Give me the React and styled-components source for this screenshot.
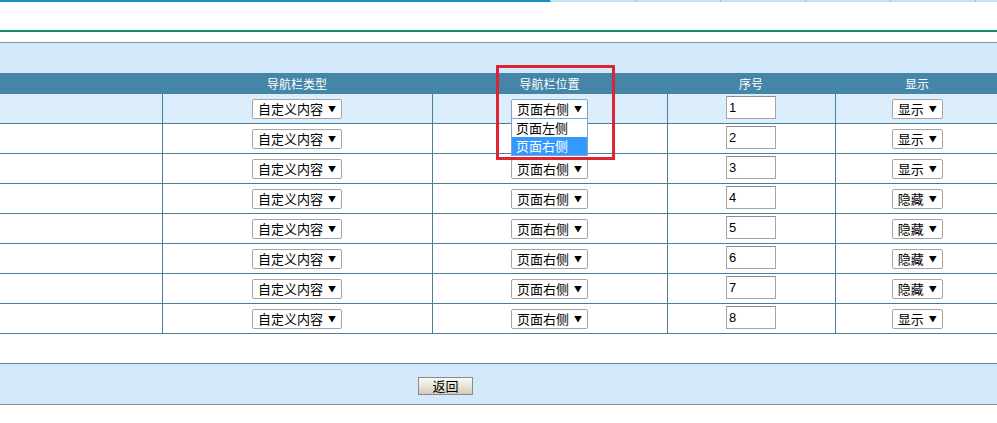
import styled, { createGlobalStyle } from "styled-components";

const GlobalStyle = createGlobalStyle`
  body {
    margin: 0;
    background: #fff;
    font-family: "Noto Sans CJK SC", "Liberation Sans", sans-serif;
    font-size: 13px;
    color: #000;
  }
`;

const rows = [
  { pos: "页面右侧", order: "1", show: "显示" },
  { pos: "页面右侧", order: "2", show: "显示" },
  { pos: "页面右侧", order: "3", show: "显示" },
  { pos: "页面右侧", order: "4", show: "隐藏" },
  { pos: "页面右侧", order: "5", show: "隐藏" },
  { pos: "页面右侧", order: "6", show: "隐藏" },
  { pos: "页面右侧", order: "7", show: "隐藏" },
  { pos: "页面右侧", order: "8", show: "显示" },
];

const Page = styled.div`
  width: 997px;
  overflow: hidden;
`;

const TopStrip = styled.div`
  display: flex;
  height: 2px;
`;

const ActiveStrip = styled.div`
  width: 550px;
  flex: none;
  background: #1591c8;
`;

const TabStrip = styled.div`
  width: 84px;
  flex: none;
  background: #bfe4f6;
  border-left: 1px solid #8cc6e2;
`;

const Masthead = styled.div`
  height: 28px;
  border-bottom: 2px solid #1b8a66;
`;

const Body = styled.div`
  margin-top: 10px;
  border-top: 1px solid #8a8f96;
`;

const Caption = styled.div`
  height: 30px;
  background: #d3e9fb;
`;

const Table = styled.table`
  border-collapse: collapse;
  table-layout: fixed;
  width: 999px;
`;

const HeadCell = styled.th`
  height: 21px;
  padding: 0;
  background: #4586a8;
  color: #fff;
  font-weight: normal;
  font-size: 12px;
  text-align: center;
  line-height: 21px;
`;

const Row = styled.tr`
  background: ${({ $hot }) => ($hot ? "#dcedfc" : "#fff")};
`;

const Cell = styled.td`
  position: relative;
  height: 29px;
  padding: 0;
  text-align: center;
  vertical-align: middle;
  border-bottom: 1px solid #4a7e96;
  border-left: ${({ $first }) => ($first ? "none" : "1px solid #4a7e96")};
`;

const SelectWrap = styled.span`
  position: relative;
  display: inline-block;
  vertical-align: middle;
  margin-top: -2px;
`;

const Select = styled.span`
  display: inline-flex;
  align-items: center;
  box-sizing: border-box;
  height: 20px;
  padding: 0 5px;
  gap: 5px;
  background: #fff;
  border: 1px solid ${({ $focus }) => ($focus ? "#7ea6d0" : "#a4a4a4")};
  border-radius: 2px;
  font-size: 13px;
  line-height: 18px;
  visibility: ${({ $covered }) => ($covered ? "hidden" : "visible")};
`;

const Arrow = styled.span`
  font-size: 8px;
  line-height: 1;
`;

const NumberBox = styled.span`
  display: inline-block;
  box-sizing: border-box;
  width: 50px;
  height: 23px;
  padding-left: 2px;
  text-align: left;
  background: #fff;
  border: 1px solid #a4a4a4;
  border-top-color: #8c8c8c;
  font-family: "Liberation Sans", Arial, sans-serif;
  font-size: 13px;
  line-height: 21px;
  vertical-align: middle;
  margin-top: -4px;
`;

const DropList = styled.div`
  position: absolute;
  left: 0;
  right: 0;
  top: 19px;
  z-index: 2;
  box-sizing: border-box;
  background: #fff;
  border: 1px solid #7ea6d0;
  text-align: left;
`;

const Option = styled.div`
  height: 18px;
  line-height: 18px;
  padding-left: 4px;
  font-size: 13px;
  white-space: nowrap;
  background: ${({ $active }) => ($active ? "#3399ff" : "#fff")};
  color: ${({ $active }) => ($active ? "#fff" : "#000")};
`;

const Highlight = styled.div`
  position: absolute;
  left: 63px;
  top: -29px;
  width: 119px;
  height: 95px;
  box-sizing: border-box;
  border: 3px solid #dc2432;
  z-index: 3;
  pointer-events: none;
`;

const Gap = styled.div`
  height: 29px;
`;

const Footer = styled.div`
  display: flex;
  align-items: center;
  height: 40px;
  padding-left: 418px;
  background: #d3e9fb;
  border-top: 1px solid #5a8aa0;
  border-bottom: 1px solid #8a8f96;
`;

const BackButton = styled.button`
  width: 55px;
  height: 18px;
  padding: 0;
  margin-top: 3px;
  border: 1px solid #8a8a8a;
  background: linear-gradient(#fbfaf6, #e4dfd3 60%, #d2cbbb);
  font-family: "Noto Sans CJK SC", sans-serif;
  font-size: 13px;
  line-height: 16px;
  color: #000;
`;

const Dropdown = ({ label, focus, covered, children }) => (
  <SelectWrap>
    <Select $focus={focus} $covered={covered}>
      {label}
      <Arrow>▼</Arrow>
    </Select>
    {children}
  </SelectWrap>
);

export default function App() {
  return (
    <Page>
      <GlobalStyle />
      <TopStrip>
        <ActiveStrip />
        {[0, 1, 2, 3, 4, 5].map((i) => (
          <TabStrip key={i} />
        ))}
      </TopStrip>
      <Masthead />
      <Body>
        <Caption />
        <Table>
          <colgroup>
            <col style={{ width: 162 }} />
            <col style={{ width: 270 }} />
            <col style={{ width: 235 }} />
            <col style={{ width: 168 }} />
            <col style={{ width: 164 }} />
          </colgroup>
          <thead>
            <tr>
              <HeadCell />
              <HeadCell>导航栏类型</HeadCell>
              <HeadCell>导航栏位置</HeadCell>
              <HeadCell>序号</HeadCell>
              <HeadCell>显示</HeadCell>
            </tr>
          </thead>
          <tbody>
            {rows.map((r, i) => (
              <Row key={r.order} $hot={i === 0}>
                <Cell $first />
                <Cell>
                  <Dropdown label="自定义内容" />
                </Cell>
                <Cell>
                  <Dropdown label={r.pos} focus={i === 0} covered={i === 1}>
                    {i === 0 && (
                      <DropList>
                        <Option>页面左侧</Option>
                        <Option $active>页面右侧</Option>
                      </DropList>
                    )}
                  </Dropdown>
                  {i === 0 && <Highlight />}
                </Cell>
                <Cell>
                  <NumberBox>{r.order}</NumberBox>
                </Cell>
                <Cell>
                  <Dropdown label={r.show} />
                </Cell>
              </Row>
            ))}
          </tbody>
        </Table>
        <Gap />
        <Footer>
          <BackButton>返回</BackButton>
        </Footer>
      </Body>
    </Page>
  );
}
